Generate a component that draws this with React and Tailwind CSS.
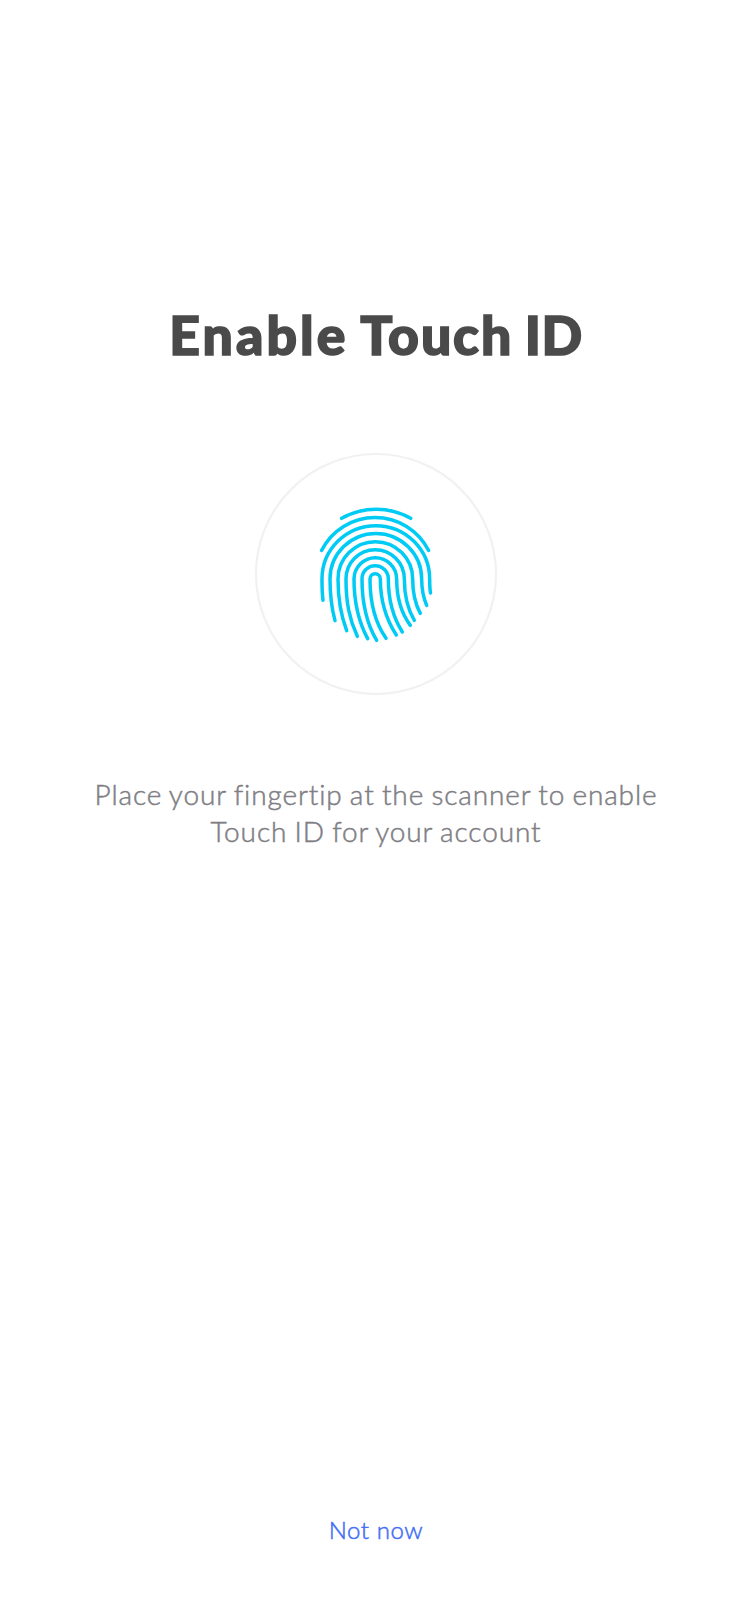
const ridges = [
  "M290 226A212 212 0 0 1 497 226",
  "M229.500 322.500A180 180 0 0 1 551 322.500",
  "M234 472Q231 450 231 408A161.500 160 0 0 1 554 408Q554 435 556.500 450",
  "M270 533C259 492 255 460 255 408A137 136 0 0 1 530 408C530 445 536 466 545 487",
  "M305 563C287 515 279 470 279 408A112 112 0 0 1 503 408C503 452 511 484 526 511",
  "M337 580C313 528 303 480 303 408A87.500 88 0 0 1 478 408C478 460 489 500 508 532",
  "M368 587C340 535 327 470 327 408A64 64 0 0 1 455 408C455 466 470 512 496 547",
  "M395 592C367 545 351 480 351 408A39.500 40 0 0 1 430 408C430 470 443 521 472 567",
  "M423 586C391 540 375 480 375 408A15.500 16 0 0 1 406 408C406 480 424 530 454 576",
];

function Fingerprint() {
  return (
    <svg viewBox="0 0 780 780" className="h-[260px] w-[260px]" fill="none" aria-hidden="true">
      <circle cx="393" cy="393" r="360" stroke="#f1f1f2" strokeWidth="6.500" />
      <g stroke="#00cbf5" strokeWidth="10.500" strokeLinecap="round">
        {ridges.map((d) => (
          <path key={d} d={d} />
        ))}
      </g>
    </svg>
  );
}

export default function App() {
  return (
    <main className="flex h-[1624px] w-[750px] flex-col items-center bg-white pt-[300px] font-['Lato',sans-serif]">
      <h1 className="h-[70px] whitespace-nowrap pl-[2px] text-[53.5px] font-black leading-[68px] text-[#4a4a4a] [-webkit-text-stroke:1.6px_#4a4a4a] [word-spacing:-1px]">
        <span className="tracking-[3.1px]">Enable</span>{" "}
        <span className="tracking-[1.9px]">Touch</span>{" "}
        <span className="tracking-[0.5px]">ID</span>
      </h1>
      <div className="mt-[73px] h-[260px] w-[260px]">
        <Fingerprint />
      </div>
      <p className="mt-[73px] whitespace-nowrap pl-[2px] text-center text-[28px] font-light leading-[37px] tracking-[0.88px] text-[#7e7e84] [-webkit-text-stroke:0.5px_#7e7e84] [word-spacing:-1.2px]">
        Place your fingertip at the scanner to enable
        <br />
        Touch ID for your account
      </p>
      <button className="mt-auto mb-[76px] pl-[2px] text-[24px] font-light leading-[36px] tracking-[0.6px] text-[#416df6] [-webkit-text-stroke:0.5px_#416df6]">
        Not now
      </button>
    </main>
  );
}
